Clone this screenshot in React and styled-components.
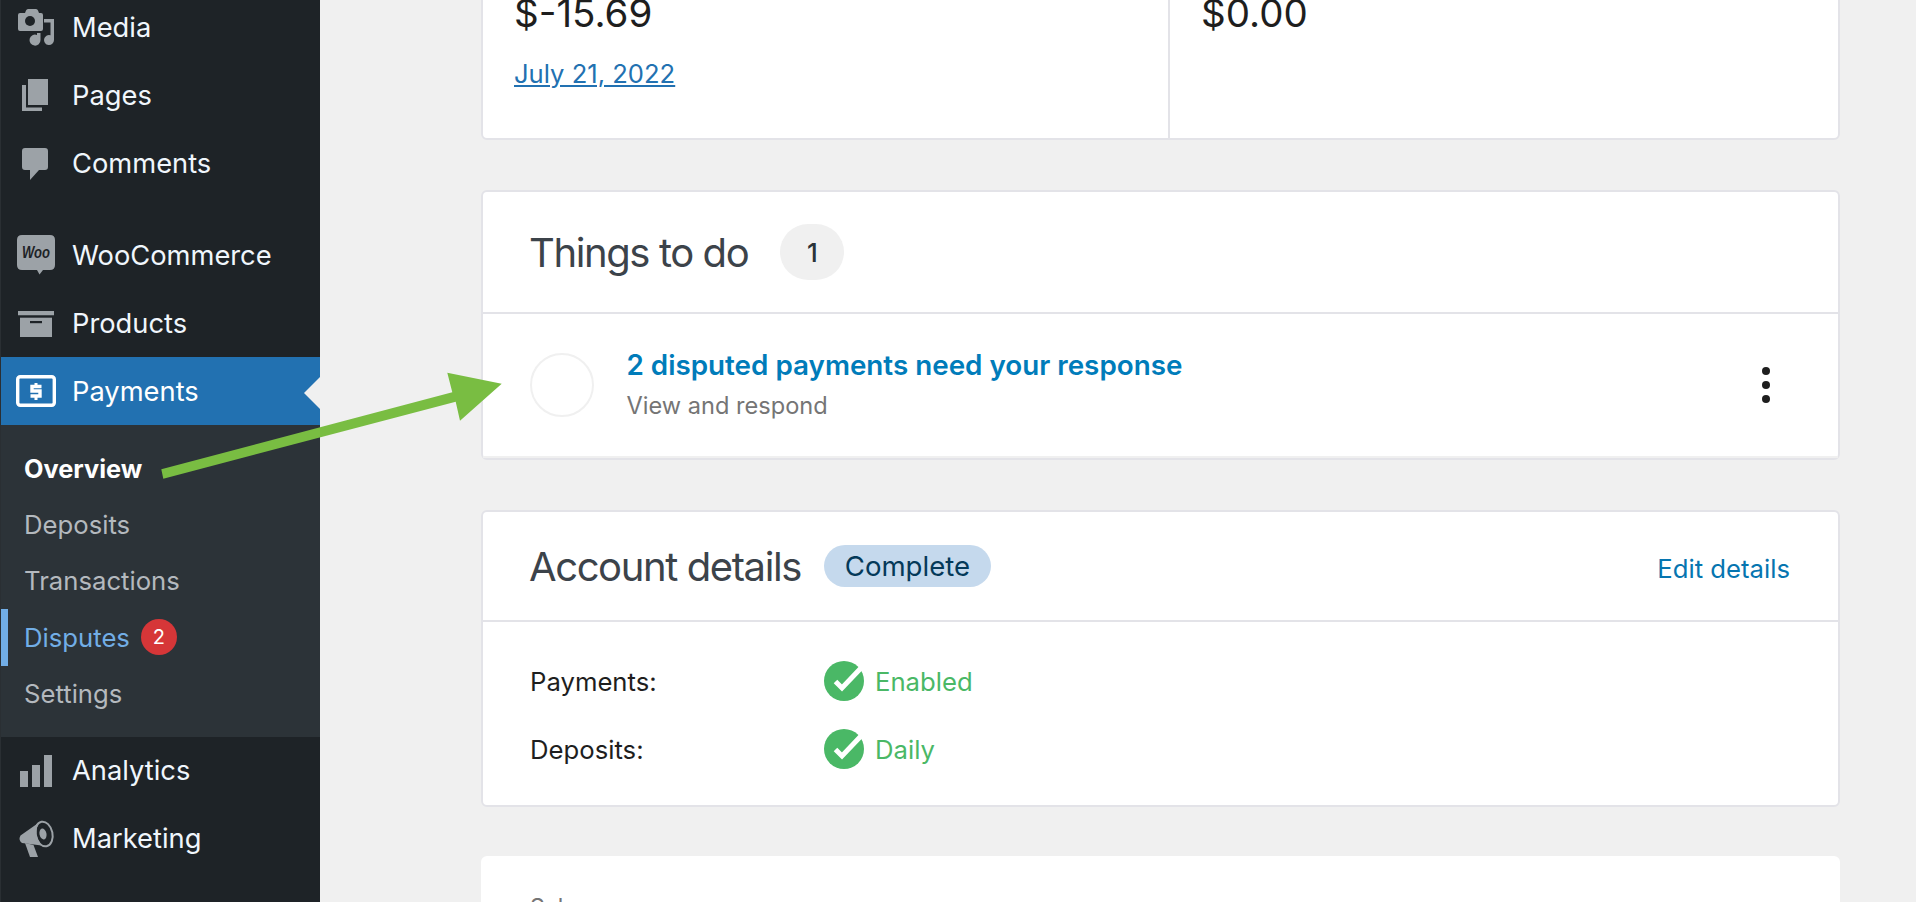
import styled, { createGlobalStyle } from "styled-components";

const GlobalStyle = createGlobalStyle`
  html, body {
    margin: 0;
    height: 902px;
    overflow: hidden;
    background: #f0f0f0;
    font-family: Inter, "Liberation Sans", sans-serif;
  }
`;

const Page = styled.div`
  position: relative;
  display: flex;
  height: 902px;
  overflow: hidden;
`;

const Sidebar = styled.nav`
  flex: 0 0 320px;
  box-sizing: border-box;
  height: 902px;
  background: #1e2327;
  border-left: 1px solid #2a2f33;
  overflow: hidden;
`;

const MenuGroup = styled.div`
  margin-top: ${(p) => p.$top || 0}px;
  margin-left: -1px;
`;

const MenuRow = styled.div`
  position: relative;
  display: flex;
  align-items: center;
  gap: 16px;
  height: 68px;
  padding-left: 16px;
  font-size: 27.3px;
  background: ${(p) => (p.$active ? "#2271b1" : "transparent")};
  color: ${(p) => (p.$active ? "#fff" : "#f0f6fc")};
`;

const Notch = styled.span`
  position: absolute;
  right: 0;
  top: 20px;
  width: 0;
  height: 0;
  border-top: 16px solid transparent;
  border-bottom: 16px solid transparent;
  border-right: 16px solid #f0f0f0;
`;

const IconBox = styled.svg`
  flex: 0 0 40px;
  width: 40px;
  height: 40px;
`;

const SubMenu = styled.div`
  background: #2c3338;
  padding: 15px 0;
`;

const SubRow = styled.div`
  display: flex;
  align-items: center;
  gap: 11px;
  box-sizing: border-box;
  height: 56.4px;
  padding-left: ${(p) => (p.$current ? 16 : 24)}px;
  border-left: ${(p) => (p.$current ? "8px solid #72aee6" : "0")};
  font-size: ${(p) => (p.$bold ? 25.3 : 25.7)}px;
  font-weight: ${(p) => (p.$bold ? 700 : 400)};
  color: ${(p) => (p.$bold ? "#fff" : p.$current ? "#72aee6" : "#b4b9be")};
`;

const CountBubble = styled.span`
  display: flex;
  align-items: center;
  justify-content: center;
  width: 36px;
  height: 36px;
  border-radius: 50%;
  background: #d63638;
  color: #fff;
  font-size: 20px;
  font-weight: 400;
`;

const Main = styled.main`
  flex: 1;
  box-sizing: border-box;
  padding: 0 76px 0 161px;
  display: flex;
  flex-direction: column;
`;

const Card = styled.section`
  flex: none;
  box-sizing: border-box;
  background: #fff;
  border: 2px solid #e3e3e8;
  border-radius: 6px;
  margin-bottom: ${(p) => p.$gap || 50}px;
`;

const SummaryCard = styled(Card)`
  display: grid;
  grid-template-columns: 685px 1fr;
  height: 180px;
  margin-top: -40px;
`;

const SummaryCell = styled.div`
  padding: 29px 31px 0;
  & + & {
    border-left: 2px solid #e3e3e8;
  }
`;

const Amount = styled.div`
  font-size: 38.5px;
  line-height: 44px;
  color: #1e1e1e;
`;

const DateLink = styled.a`
  display: block;
  margin-top: 23px;
  font-size: 25.6px;
  line-height: 32px;
  color: #2271b1;
  text-decoration: underline;
`;

const CardHeader = styled.header`
  display: flex;
  align-items: center;
  box-sizing: border-box;
  height: ${(p) => p.$height}px;
  padding: 0 48px 0 47px;
  border-bottom: 2px solid #e3e3e8;
`;

const Heading = styled.h2`
  margin: 0 0 0 -1px;
  font-size: 40px;
  font-weight: 400;
  color: #3c434a;
  letter-spacing: -1.4px;
`;

const CountBadge = styled.span`
  display: flex;
  align-items: center;
  justify-content: center;
  width: 64px;
  height: 56px;
  margin-left: 32px;
  border-radius: 28px;
  background: #f0f0f0;
  font-size: 26px;
  font-weight: 500;
  color: #2c3338;
`;

const StatusPill = styled.span`
  display: flex;
  align-items: center;
  justify-content: center;
  width: 167px;
  height: 42px;
  margin-left: 23px;
  border-radius: 21px;
  background: #c5d9ed;
  font-size: 27.6px;
  color: #043959;
`;

const EditLink = styled.a`
  margin-left: auto;
  font-size: 25.7px;
  color: #0675b0;
  position: relative;
  top: 2px;
`;

const TaskRow = styled.div`
  display: flex;
  align-items: center;
  box-sizing: border-box;
  height: 144px;
  padding: 0 48px 0 47px;
  border-bottom: 2px solid #f0f0f0;
`;

const TaskCircle = styled.span`
  flex: 0 0 64px;
  box-sizing: border-box;
  height: 64px;
  border-radius: 50%;
  border: 2px solid #f0f0f0;
`;

const TaskText = styled.div`
  flex: 1;
  margin-left: 32.500px;
  padding-bottom: 2px;
`;

const TaskTitle = styled.div`
  font-size: 27.8px;
  font-weight: 600;
  line-height: 34px;
  color: #007cba;
`;

const TaskHint = styled.div`
  margin-top: 9px;
  font-size: 23.6px;
  line-height: 30px;
  color: #757575;
`;

const Dots = styled.svg`
  width: 8px;
  height: 36px;
  margin-right: 20px;
`;

const DetailList = styled.div`
  padding: 25px 48px 0 47px;
  height: 183px;
  box-sizing: border-box;
`;

const DetailRow = styled.div`
  display: flex;
  align-items: center;
  height: 68px;
  font-size: 25.7px;
  color: #1e1e1e;
`;

const DetailLabel = styled.span`
  flex: 0 0 294px;
`;

const DetailValue = styled.span`
  display: flex;
  align-items: center;
  gap: 11px;
  color: #4ab866;
`;

const SalesCard = styled.section`
  flex: none;
  box-sizing: border-box;
  background: #fff;
  border-radius: 6px;
  height: 200px;
  padding: 37px 49px 0;
  font-size: 23px;
  line-height: 28px;
  color: #757575;
`;

const ArrowLayer = styled.svg`
  position: absolute;
  left: 0;
  top: 0;
  width: 1916px;
  height: 902px;
  pointer-events: none;
`;

const MediaIcon = () => (
  <IconBox viewBox="0 0 40 40" fill="#9ca2a7">
    <path d="M4 6h5l1-2.500Q10.600 2 12 2h8q1.500 0 2 1.500L23 6h2q2 0 2 2v14q0 2-2 2H4q-2 0-2-2V8q0-2 2-2z" />
    <circle cx="14" cy="14" r="5" fill="#1e2327" />
    <path d="M28 12h10v21a5 5 0 1 1-3.500-4.800V15.500H28z" />
    <path d="M21 26h3.500v7a5.500 5.500 0 1 1-3.500-5z" />
  </IconBox>
);

const PagesIcon = () => (
  <IconBox viewBox="0 0 40 40" fill="#9ca2a7">
    <path d="M6 10h4v22.500h16V36H6z" />
    <path d="M12 4h20v26H12z" />
  </IconBox>
);

const CommentsIcon = () => (
  <IconBox viewBox="0 0 40 40" fill="#9ca2a7">
    <path d="M9 5h20q3 0 3 3v16q0 3-3 3h-6l-9 10V27H9q-3 0-3-3V8q0-3 3-3z" />
  </IconBox>
);

const WooIcon = () => (
  <IconBox viewBox="0 0 40 40" fill="#9ca2a7">
    <path d="M6 0h28q5 0 5 5v25q0 5-5 5H27l-3.500 4.500L21 35H6q-5 0-5-5V5q0-5 5-5z" />
    <text
      x="6"
      y="23"
      textLength="28"
      lengthAdjust="spacingAndGlyphs"
      fontFamily="Liberation Sans"
      fontStyle="italic"
      fontWeight="700"
      fontSize="16"
      fill="#1e2327"
    >
      Woo
    </text>
  </IconBox>
);

const ProductsIcon = () => (
  <IconBox viewBox="0 0 40 40" fill="#9ca2a7">
    <path d="M2 8h36v4.300H2z" />
    <path d="M4 14.700h32V34H4z" />
    <path d="M14 18h12v2.200H14z" fill="#1e2327" />
  </IconBox>
);

const PaymentsIcon = () => (
  <IconBox viewBox="0 0 40 40" fill="none" stroke="#fff">
    <rect x="1.700" y="5.700" width="36.600" height="28.600" rx="2.500" strokeWidth="3.400" />
    <path d="M25.500 15.500H16v4.500h8v5H14.500" strokeWidth="3.400" />
    <path d="M20 12v3M20 25v4" strokeWidth="3" />
  </IconBox>
);

const AnalyticsIcon = () => (
  <IconBox viewBox="0 0 40 40" fill="#9ca2a7">
    <path d="M4 20h8v16H4zM16 14h8v22h-8zM28 4h8v32h-8z" />
  </IconBox>
);

const MarketingIcon = () => (
  <IconBox viewBox="0 0 40 40" fill="#9ca2a7">
    <path d="M4.500 16.500L23 3.500Q17 14 25.500 26.500L6 24Q2 21 4.500 16.500z" />
    <path d="M9 24l5 14h8l-4.500-12z" />
    <ellipse cx="28" cy="15" rx="8.500" ry="12.500" transform="rotate(-12 28 15)" fill="none" stroke="#9ca2a7" strokeWidth="2" />
    <ellipse cx="27" cy="15" rx="3.500" ry="5.500" transform="rotate(-12 27 15)" />
  </IconBox>
);

const CheckIcon = () => (
  <svg width="40" height="40" viewBox="0 0 40 40">
    <circle cx="20" cy="20" r="20" fill="#4ab866" />
    <path d="M11.500 20.500L18 27L37 7" fill="none" stroke="#fff" strokeWidth="5" />
  </svg>
);

const App = () => {
  return (
    <Page>
      <GlobalStyle />
      <Sidebar>
        <MenuGroup $top={-7}>
          <MenuRow><MediaIcon />Media</MenuRow>
          <MenuRow><PagesIcon />Pages</MenuRow>
          <MenuRow><CommentsIcon />Comments</MenuRow>
        </MenuGroup>
        <MenuGroup $top={24}>
          <MenuRow><WooIcon />WooCommerce</MenuRow>
          <MenuRow><ProductsIcon />Products</MenuRow>
          <MenuRow $active>
            <PaymentsIcon />Payments
            <Notch />
          </MenuRow>
          <SubMenu>
            <SubRow $bold>Overview</SubRow>
            <SubRow>Deposits</SubRow>
            <SubRow>Transactions</SubRow>
            <SubRow $current>
              Disputes
              <CountBubble>2</CountBubble>
            </SubRow>
            <SubRow>Settings</SubRow>
          </SubMenu>
          <MenuRow><AnalyticsIcon />Analytics</MenuRow>
          <MenuRow><MarketingIcon />Marketing</MenuRow>
        </MenuGroup>
      </Sidebar>

      <Main>
        <SummaryCard>
          <SummaryCell>
            <Amount>$-15.69</Amount>
            <DateLink>July 21, 2022</DateLink>
          </SummaryCell>
          <SummaryCell>
            <Amount>$0.00</Amount>
          </SummaryCell>
        </SummaryCard>

        <Card>
          <CardHeader $height={122}>
            <Heading>Things to do</Heading>
            <CountBadge>1</CountBadge>
          </CardHeader>
          <TaskRow>
            <TaskCircle />
            <TaskText>
              <TaskTitle>2 disputed payments need your response</TaskTitle>
              <TaskHint>View and respond</TaskHint>
            </TaskText>
            <Dots viewBox="0 0 8 36" fill="#1e1e1e">
              <circle cx="4" cy="4" r="4" />
              <circle cx="4" cy="18" r="4" />
              <circle cx="4" cy="32" r="4" />
            </Dots>
          </TaskRow>
        </Card>

        <Card $gap={49}>
          <CardHeader $height={110}>
            <Heading>Account details</Heading>
            <StatusPill>Complete</StatusPill>
            <EditLink>Edit details</EditLink>
          </CardHeader>
          <DetailList>
            <DetailRow>
              <DetailLabel>Payments:</DetailLabel>
              <DetailValue><CheckIcon />Enabled</DetailValue>
            </DetailRow>
            <DetailRow>
              <DetailLabel>Deposits:</DetailLabel>
              <DetailValue><CheckIcon />Daily</DetailValue>
            </DetailRow>
          </DetailList>
        </Card>

        <SalesCard>Sales</SalesCard>
      </Main>

      <ArrowLayer viewBox="0 0 1916 902">
        <path
          d="M161.300 469.300L452.300 392.300L447.300 372.700L501.700 383.700L460 420.700L455.700 401.700L163.300 478.700Z"
          fill="#79bd42"
        />
      </ArrowLayer>
    </Page>
  );
};

export default App;
